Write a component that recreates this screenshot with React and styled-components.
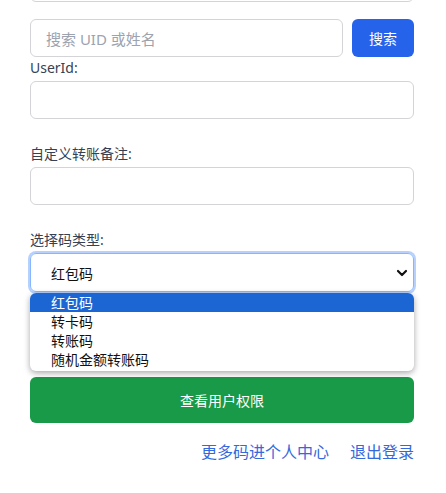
import React from "react";
import styled, { createGlobalStyle } from "styled-components";

const Global = createGlobalStyle`
  html, body { margin: 0; padding: 0; background: #ffffff; }
  body { font-family: "Noto Sans", "Noto Sans CJK SC", sans-serif; color: #333; overflow: hidden; }
  * { box-sizing: border-box; }
`;

const Page = styled.div`
  width: 446px;
  height: 493px;
  overflow: hidden;
  background: #fff;
`;

const Form = styled.div`
  width: 384px;
  margin-left: 30px;
  margin-top: -36px;
  display: flex;
  flex-direction: column;
`;

const Input = styled.div`
  height: 38px;
  border: 1px solid #d4d4d8;
  border-radius: 6px;
  background: #fff;
  display: flex;
  align-items: center;
  padding-left: 15px;
  font-size: 15px;
  color: #9ca3af;
  flex: ${(p) => (p.$grow ? 1 : "none")};
  margin-bottom: ${(p) => p.$mb || 0}px;
`;

const SearchRow = styled.div`
  display: flex;
  gap: 9px;
  margin-top: 17px;
`;

const SearchButton = styled.div`
  width: 62px;
  height: 38px;
  border-radius: 6px;
  background: #2563eb;
  color: #fff;
  font-size: 14px;
  display: flex;
  align-items: center;
  justify-content: center;
`;

const Label = styled.div`
  font-size: 14px;
  line-height: 22px;
  color: #374151;
  margin-bottom: 2px;
`;

const SelectWrap = styled.div`
  position: relative;
  margin-bottom: 23px;
`;

const Select = styled.div`
  height: 39px;
  border: 1px solid #86b7fe;
  border-radius: 6px;
  box-shadow: 0 0 0 2px rgba(96, 150, 250, 0.45);
  display: flex;
  align-items: center;
  justify-content: space-between;
  padding: 0 5px 0 20px;
  font-size: 14px;
  color: #111;
`;

const Popup = styled.ul`
  position: absolute;
  top: 40px;
  left: 0;
  right: 0;
  margin: 0;
  padding: 0 0 2px;
  list-style: none;
  background: #fff;
  border-radius: 6px;
  overflow: hidden;
  box-shadow: 0 2px 6px rgba(0, 0, 0, 0.35);
  z-index: 5;
`;

const Option = styled.li`
  height: 19px;
  line-height: 19px;
  padding-left: 21px;
  font-size: 14px;
  color: ${(p) => (p.$active ? "#fff" : "#111")};
  background: ${(p) => (p.$active ? "#1c66d3" : "transparent")};
`;

const Button = styled.div`
  height: 46px;
  border-radius: 6px;
  background: ${(p) => p.$bg};
  color: #fff;
  font-size: 14px;
  display: flex;
  align-items: center;
  justify-content: center;
  margin-bottom: ${(p) => p.$mb || 0}px;
`;

const Links = styled.div`
  display: flex;
  justify-content: flex-end;
  gap: 21px;
  margin-top: 18px;
`;

const Link = styled.a`
  font-size: 16px;
  line-height: 22px;
  color: #3469dc;
  text-decoration: none;
`;

const Chevron = () => (
  <svg width="12" height="12" viewBox="0 0 12 12">
    <path d="M2 4 L6 8 L10 4" fill="none" stroke="#111" strokeWidth="2.2" strokeLinecap="round" strokeLinejoin="round" />
  </svg>
);

const options = ["红包码", "转卡码", "转账码", "随机金额转账码"];

export default function App() {
  return (
    <Page>
      <Global />
      <Form>
        <Input />
        <SearchRow>
          <Input $grow>搜索 UID 或姓名</Input>
          <SearchButton>搜索</SearchButton>
        </SearchRow>
        <Label>UserId:</Label>
        <Input $mb={24} />
        <Label>自定义转账备注:</Label>
        <Input $mb={24} />
        <Label>选择码类型:</Label>
        <SelectWrap>
          <Select>
            <span>红包码</span>
            <Chevron />
          </Select>
          <Popup>
            {options.map((o, i) => (
              <Option key={o} $active={i === 0}>{o}</Option>
            ))}
          </Popup>
        </SelectWrap>
        <Button $bg="#2563eb" $mb={16}>生成二维码</Button>
        <Button $bg="#189a48">查看用户权限</Button>
        <Links>
          <Link href="#">更多码进个人中心</Link>
          <Link href="#">退出登录</Link>
        </Links>
      </Form>
    </Page>
  );
}
